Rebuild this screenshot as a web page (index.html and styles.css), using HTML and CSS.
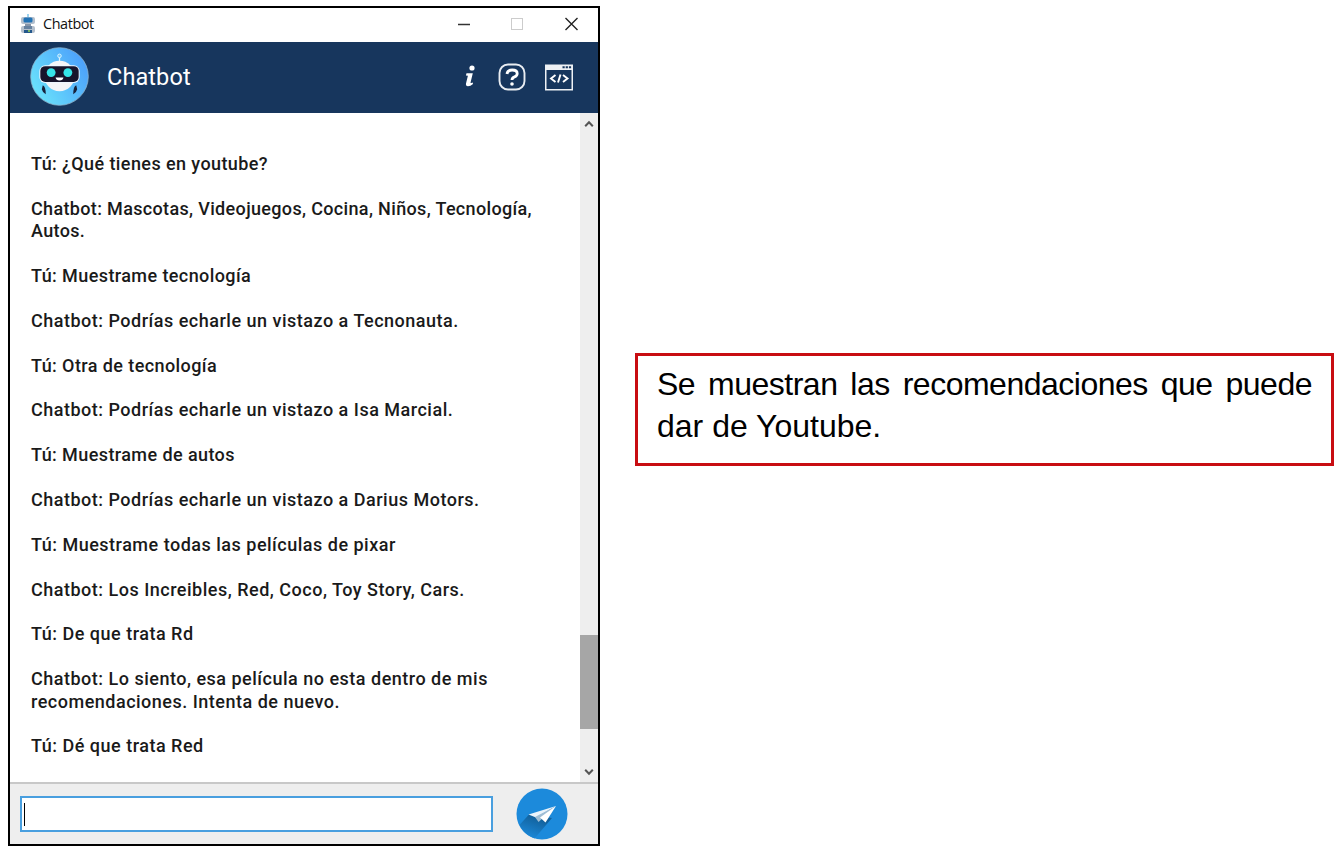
FILE: index.html
```html
<!DOCTYPE html>
<html lang="es">
<head>
<meta charset="utf-8">
<title>Chatbot</title>
<link rel="stylesheet" href="styles.css">
</head>
<body>
<main class="page">
  <section class="window">
    <header class="titlebar">
      <svg class="app-icon" viewBox="0 0 14 20">
        <path d="M7 0v4" stroke="#7fc4e8" stroke-width="1.5"/>
        <rect x="0" y="3" width="14" height="7" rx="2" fill="#b4bfcc"/>
        <rect x="2.5" y="3.5" width="9" height="5" rx="1.5" fill="#2273b5"/>
        <path d="M4 10h6v2H4z" fill="#8795a8"/>
        <rect x="0" y="12" width="14" height="7" rx="2" fill="#b4bfcc"/>
        <path d="M3 12h8v3H3z" fill="#66819f"/>
        <path d="M3 16h8v3H3z" fill="#24588c"/>
        <path d="M7 16h2v2H7z" fill="#7bb661"/>
      </svg>
      <span class="title">Chatbot</span>
      <svg class="controls" viewBox="0 0 124 16">
        <path d="M1 8.500h12" stroke="#333" stroke-width="1.5"/>
        <rect x="54.5" y="2.5" width="11" height="11" fill="none" stroke="#ccc"/>
        <path d="M108.500 2l12 12M120.500 2l-12 12" stroke="#222" stroke-width="1.4"/>
      </svg>
    </header>
    <div class="banner">
      <svg class="avatar" viewBox="0 0 60 60">
        <defs>
          <linearGradient id="sky" x1="0" y1="0.8" x2="1" y2="0.2">
            <stop offset="0" stop-color="#6ce6fb"/>
            <stop offset="1" stop-color="#4a9cfb"/>
          </linearGradient>
        </defs>
        <circle cx="30" cy="30" r="29.3" fill="url(#sky)" stroke="#8db5cd" stroke-width=".8"/>
        <path d="M30 10v6" stroke="#d8f2ff" stroke-width="1.3"/>
        <circle cx="30" cy="9" r="1.8" fill="#6dc8fb" stroke="#d8f2ff"/>
        <circle cx="30" cy="29.500" r="15.500" fill="#f4f5f8"/>
        <rect x="9.500" y="18.500" width="41" height="18" rx="6" fill="#edf6ff"/>
        <rect x="10.500" y="19.500" width="39" height="16" rx="5" fill="#17152c"/>
        <circle cx="21.500" cy="26" r="4.500" fill="#36e5e8"/>
        <circle cx="38.500" cy="26" r="4.500" fill="#36e5e8"/>
        <path d="M26 31h8q-.5 3-4 3t-4-3z" fill="#fff"/>
        <path d="M13 39q3 1 3 9q-3.500-2-4-5zM47 39q-3 1-3 9q3.500-2 4-5z" fill="#17223b"/>
      </svg>
      <h1 class="name">Chatbot</h1>
      <svg class="actions" viewBox="0 0 112 30">
        <circle cx="11" cy="6" r="2.600" fill="#fff"/>
        <path d="M5.500 11.300h6.300l-2.300 9.500q1 .5 2.200-.3l.3 1.400q-2.500 2.300-5 2.300q-2.500-.2-2-2.700l1.900-7.700l-2-.3z" fill="#fff"/>
        <rect x="38.500" y="2.500" width="25" height="25" rx="8.500" fill="none" stroke="#e9edf2" stroke-width="1.900"/>
        <path d="M46 12q.4-4 5.200-4q5 0 5 3.600q0 2.400-2.700 3.300q-2.500.8-2.500 3.100" fill="none" stroke="#fff" stroke-width="2.800"/>
        <circle cx="51" cy="22" r="1.800" fill="#fff"/>
        <path d="M84 2.500h28v26H84zM85.500 8v19h25V8z" fill="#eef1f5" fill-rule="evenodd"/>
        <path d="M101.500 5.200h9" stroke="#17365d" stroke-width="1.900" stroke-dasharray="2.200 1"/>
        <path d="M94.500 13l-4.500 3.500l4.500 3.500M102 13l4.500 3.500l-4.500 3.500M99.500 12.500l-2.500 8" fill="none" stroke="#fff" stroke-width="1.900"/>
      </svg>
    </div>
    <div class="chat">
      <div class="messages">
        <p class="snug">Tú: ¿Qué tienes en youtube?</p>
        <p><span class="tight">Chatbot: Mascotas, Videojuegos, Cocina, Niños, Tecnología,</span><br><span class="tight">Autos.</span></p>
        <p class="snug">Tú: Muestrame tecnología</p>
        <p>Chatbot: Podrías echarle un vistazo a Tecnonauta.</p>
        <p class="snug">Tú: Otra de tecnología</p>
        <p>Chatbot: Podrías echarle un vistazo a Isa Marcial.</p>
        <p class="snug">Tú: Muestrame de autos</p>
        <p>Chatbot: Podrías echarle un vistazo a Darius Motors.</p>
        <p>Tú: Muestrame todas las películas de pixar</p>
        <p>Chatbot: Los Increibles, Red, Coco, Toy Story, Cars.</p>
        <p>Tú: De que trata Rd</p>
        <p>Chatbot: Lo siento, esa película no esta dentro de mis<br>recomendaciones. Intenta de nuevo.</p>
        <p>Tú: Dé que trata Red</p>
      </div>
      <div class="scrollbar">
        <svg class="arrow" viewBox="0 0 10 8"><path d="M1.200 6.200L5 2.200l3.800 4" fill="none" stroke="#555" stroke-width="2"/></svg>
        <div class="thumb"></div>
        <svg class="arrow" viewBox="0 0 10 8"><path d="M1.200 1.800L5 5.800l3.800-4" fill="none" stroke="#555" stroke-width="2"/></svg>
      </div>
    </div>
    <footer class="composer">
      <div class="field"><span class="caret"></span></div>
      <svg class="send" viewBox="0 0 52 52">
        <defs>
          <linearGradient id="shade" x1="0.7" y1="0.2" x2="0.3" y2="1">
            <stop offset="0" stop-color="#12619c"/>
            <stop offset="1" stop-color="#1c8adb"/>
          </linearGradient>
        </defs>
        <circle cx="26" cy="26" r="25.500" fill="#1c8adb"/>
        <path d="M13 26.500L3.500 37q5 10 15 13.500L36 30z" fill="url(#shade)"/>
        <path d="M12.500 26.500L40 18L20 29.500z" fill="#eaf3fb"/>
        <path d="M19 29L40 18L22.500 34z" fill="#9fbdd4"/>
        <path d="M24 29.500L40 18L29.500 34.500z" fill="#fff"/>
      </svg>
    </footer>
  </section>
  <aside class="note"><span class="condensed">Se muestran las recomendaciones que puede</span> dar de Youtube.</aside>
</main>
</body>
</html>
```
FILE: styles.css
```css
* { box-sizing: border-box; }
body { margin: 0; background: #fff; }
svg { display: block; flex: none; }
.page {
  display: flex;
  align-items: flex-start;
  gap: 35px;
  padding: 6px 0 0 8px;
}
.window {
  display: flex;
  flex-direction: column;
  width: 592px;
  height: 840px;
  border: 2px solid #000;
  background: #fff;
  font-family: Roboto, sans-serif;
}
.titlebar {
  display: flex;
  align-items: center;
  height: 34px;
  padding: 0 17px 3px 11px;
}
.app-icon { width: 14px; height: 20px; }
.title {
  flex: 1;
  margin-left: 8px;
  font: 14.4px "Open Sans", sans-serif;
  letter-spacing: -.4px;
  color: #111;
}
.controls { width: 124px; height: 16px; }
.banner {
  display: flex;
  align-items: center;
  height: 71px;
  padding: 0 25px 2px 20px;
  background: #17365d;
  color: #fff;
}
.avatar { width: 59px; height: 59px; }
.name {
  flex: 1;
  margin: 0 0 0 18px;
  font-size: 23.5px;
  font-weight: 400;
  letter-spacing: .1px;
}
.actions { width: 112px; height: 30px; }
.chat {
  display: flex;
  flex: 1;
  min-height: 0;
}
.messages {
  flex: 1;
  padding: 40px 0 0 21px;
  font-size: 18px;
  font-weight: 500;
  line-height: 22.4px;
  letter-spacing: .5px;
  white-space: nowrap;
  color: #1a1a1a;
}
.messages p { margin: 0 0 22.4px; }
.messages p:last-child { margin: 0; }
.snug { letter-spacing: .41px; }
.tight { letter-spacing: .34px; }
.scrollbar {
  display: flex;
  flex-direction: column;
  align-items: center;
  width: 18px;
  padding: 7px 0 6px;
  background: #eee;
}
.arrow { width: 10px; height: 8px; }
.thumb {
  width: 18px;
  height: 94px;
  margin: auto 0 39px;
  background: #a6a6a6;
}
.composer {
  display: flex;
  align-items: center;
  height: 62px;
  padding: 0 30px 0 10px;
  border-top: 2px solid #c8c8c8;
  background: #eee;
}
.field {
  width: 473px;
  height: 36px;
  padding: 5px 2px;
  border: 2px solid #499fdf;
  background: #fff;
}
.caret {
  display: block;
  width: 1px;
  height: 23px;
  background: #000;
}
.send { width: 52px; height: 52px; margin-left: auto; }
.note {
  width: 699px;
  height: 113px;
  margin-top: 347px;
  padding: 7px 19px;
  border: 3px solid #c80d12;
  color: #000;
  font: 32px/42px "Liberation Sans", Arial, sans-serif;
  text-align: justify;
}
.condensed { letter-spacing: -.5px; }
```
